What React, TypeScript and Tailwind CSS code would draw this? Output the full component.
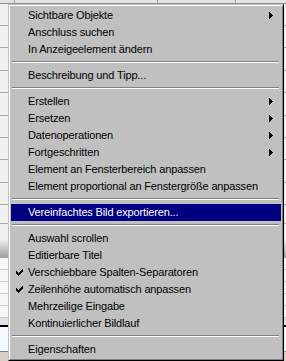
import React from "react";

type Item =
  | { kind: "sep" }
  | { kind: "item"; label: string; sub?: boolean; checked?: boolean; active?: boolean };

const items: Item[] = [
  { kind: "item", label: "Sichtbare Objekte", sub: true },
  { kind: "item", label: "Anschluss suchen" },
  { kind: "item", label: "In Anzeigeelement ändern" },
  { kind: "sep" },
  { kind: "item", label: "Beschreibung und Tipp..." },
  { kind: "sep" },
  { kind: "item", label: "Erstellen", sub: true },
  { kind: "item", label: "Ersetzen", sub: true },
  { kind: "item", label: "Datenoperationen", sub: true },
  { kind: "item", label: "Fortgeschritten", sub: true },
  { kind: "item", label: "Element an Fensterbereich anpassen" },
  { kind: "item", label: "Element proportional an Fenstergröße anpassen" },
  { kind: "sep" },
  { kind: "item", label: "Vereinfachtes Bild exportieren...", active: true },
  { kind: "sep" },
  { kind: "item", label: "Auswahl scrollen" },
  { kind: "item", label: "Editierbare Titel" },
  { kind: "item", label: "Verschiebbare Spalten-Separatoren", checked: true },
  { kind: "item", label: "Zeilenhöhe automatisch anpassen", checked: true },
  { kind: "item", label: "Mehrzeilige Eingabe" },
  { kind: "item", label: "Kontinuierlicher Bildlauf" },
  { kind: "sep" },
  { kind: "item", label: "Eigenschaften" },
];

function Arrow({ color }: { color: string }) {
  return (
    <svg width="4" height="7" viewBox="0 0 4 7" shapeRendering="crispEdges" className="block">
      <path d="M0 0h1v1h1v1h1v1h1v1h-1v1h-1v1h-1v1h-1z" fill={color} />
    </svg>
  );
}

function Check({ color }: { color: string }) {
  const px: [number, number, number][] = [
    [6, 0, 1],
    [5, 1, 2],
    [0, 2, 1],
    [4, 2, 3],
    [0, 3, 2],
    [3, 3, 3],
    [0, 4, 5],
    [1, 5, 3],
    [2, 6, 1],
  ];
  return (
    <svg width="7" height="7" viewBox="0 0 7 7" shapeRendering="crispEdges" className="block">
      {px.map(([x, y, w], i) => (
        <rect key={i} x={x} y={y} width={w} height={1} fill={color} />
      ))}
    </svg>
  );
}

const bgRows = [22, 22, 23, 22, 23, 22, 22, 23, 22, 19];

export default function App() {
  return (
    <div
      className="relative w-[286px] h-[361px] overflow-hidden bg-[#f0f0f0]"
      style={{ fontFamily: '"Liberation Sans", Arial, sans-serif' }}
    >
      {/* background table */}
      <div className="flex flex-col w-full">
        <div className="h-[3px] bg-[#e4e4e4] flex">
          <div className="w-[15px] border-r border-[#a0a0a0]" />
          <div className="w-[143px] border-r border-[#a0a0a0]" />
          <div className="w-[78px] border-r border-[#a0a0a0]" />
        </div>
        <div className="h-[1px] bg-[#909090]" />
        {bgRows.map((h, i) => (
          <div
            key={i}
            className="border-b border-[#a8a8a8] bg-[#f0f0f0]"
            style={{ height: h }}
          />
        ))}
        <div className="h-[16px] bg-[#f0f0f0]" />
        <div className="h-[18px] bg-gradient-to-b from-[#ececec] to-[#9c9c9c]" />
        {[12, 12, 12, 12, 12].map((h, i) => (
          <div key={i} className="border-b border-[#c8c8c8] bg-[#f6f6f6]" style={{ height: h }} />
        ))}
        <div className="h-[7px] bg-[#e2e2e2]" />
        <div className="h-[2px] bg-black" />
        <div className="h-[24px] bg-[#f4f8ff]" />
        <div className="h-[1px] bg-[#808080]" />
        <div className="h-[27px] bg-[#d4d0c8]" />
      </div>

      {/* context menu */}
      <div className="absolute left-[8px] top-[4px] w-[276px] h-[357px] border border-t-[#c0c0c0] border-l-[#c0c0c0] border-r-black border-b-black">
        <div className="h-full border border-t-white border-l-white border-r-[#808080] border-b-[#808080] bg-[#c0c0c0] p-[1px]">
          <div className="flex flex-col">
            {items.map((it, i) =>
              it.kind === "sep" ? (
                <div key={i} className="h-[9px] pt-[3px] pl-[1px] pr-[2px]">
                  <div className="h-[1px] bg-[#808080]" />
                  <div className="h-[1px] bg-white" />
                </div>
              ) : (
                <div
                  key={i}
                  className={`relative flex items-center h-[17px] pl-[17px] pr-[8px] text-[11px] leading-[17px] tracking-[-0.15px] whitespace-nowrap ${
                    it.active ? "bg-[#000080] text-white" : "text-black"
                  }`}
                >
                  {it.checked && (
                    <div className="absolute left-[5px] top-[5px]">
                      <Check color={it.active ? "#fff" : "#000"} />
                    </div>
                  )}
                  <span className="flex-1">{it.label}</span>
                  {it.sub && <Arrow color={it.active ? "#fff" : "#000"} />}
                </div>
              )
            )}
          </div>
        </div>
      </div>
    </div>
  );
}
